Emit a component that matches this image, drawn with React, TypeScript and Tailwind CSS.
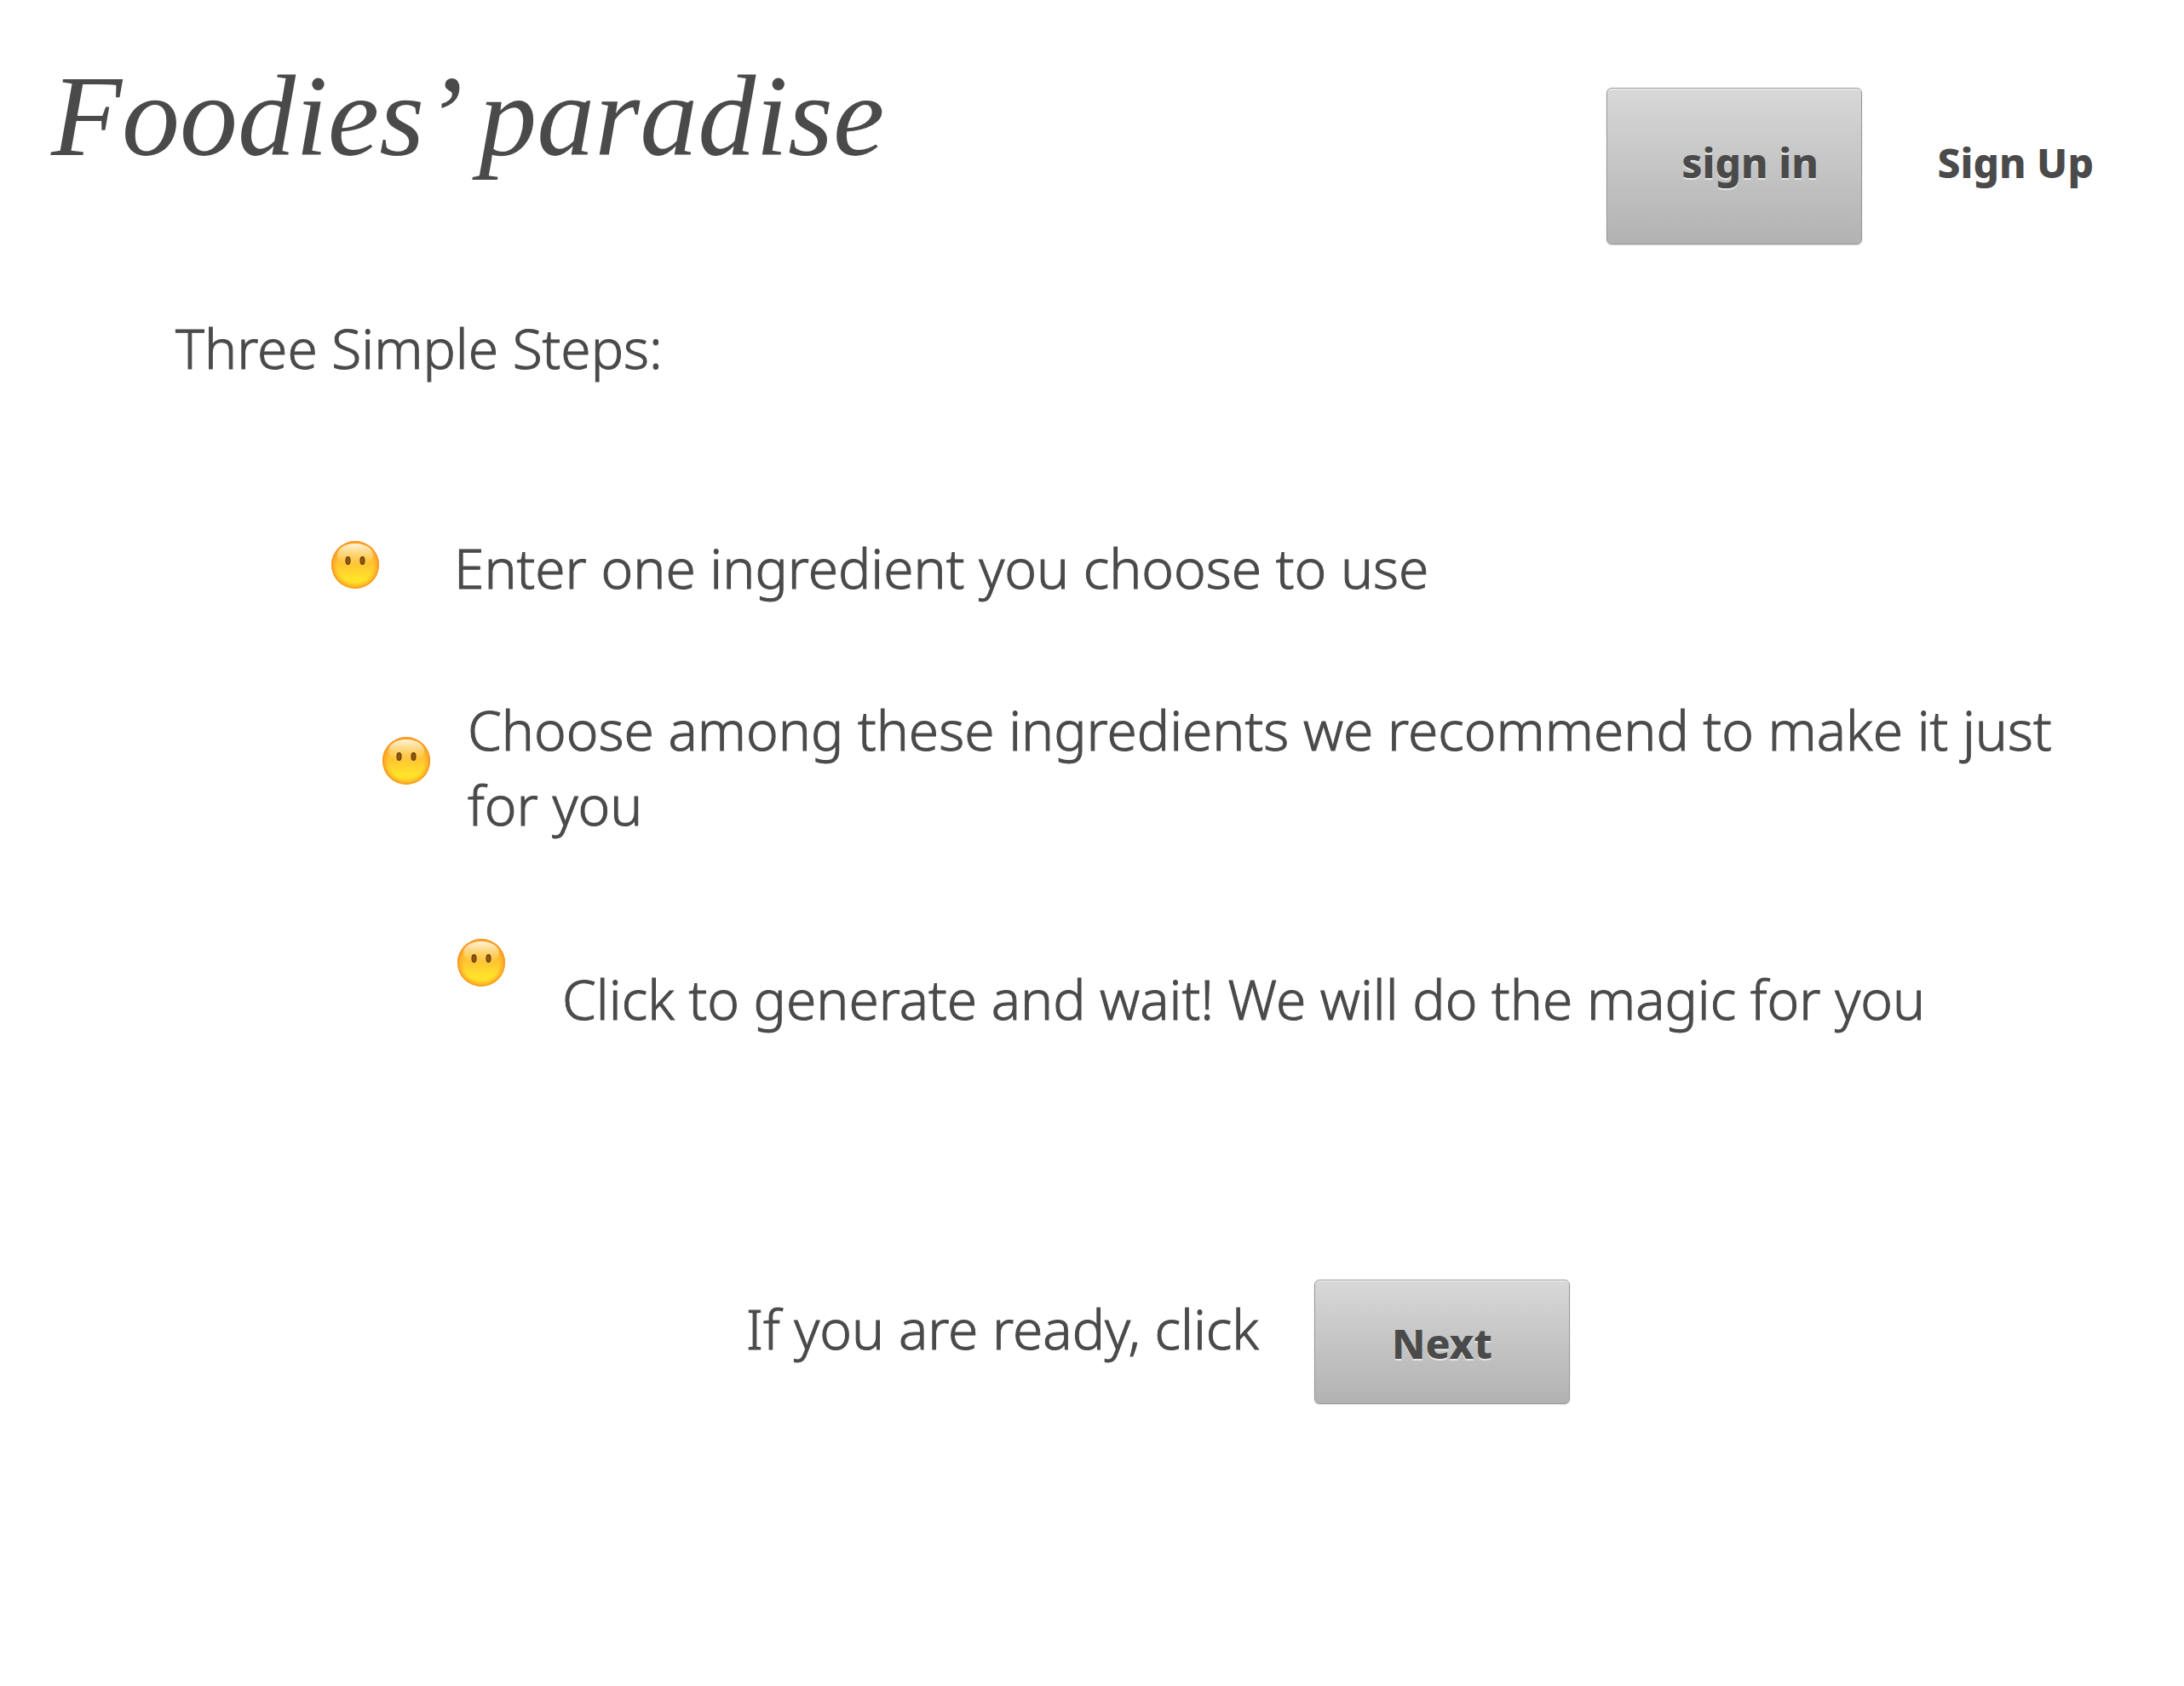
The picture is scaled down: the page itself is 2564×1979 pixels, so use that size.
const body = "text-[64px] leading-[88px] font-light [-webkit-text-stroke:1px_#4a4a4a]";
const button =
  "flex w-[300px] shrink-0 items-center justify-center rounded-md border border-[#979797] bg-linear-to-b from-[#d8d8d8] to-[#b2b2b2] text-5xl leading-[72px] font-extrabold shadow-[inset_0_1px_0_rgba(255,255,255,0.9),0_1px_2px_rgba(0,0,0,0.15)] text-shadow-[0_2px_0_rgba(255,255,255,0.6)]";

function Face({ className }: { className: string }) {
  return (
    <svg viewBox="0 0 56 56" className={`size-14 shrink-0 ${className}`} aria-hidden="true">
      <defs>
        <linearGradient id="skin" x1="0" y1="0" x2="0" y2="1">
          <stop offset="0" stopColor="#fdb92b" />
          <stop offset="0.45" stopColor="#ffc233" />
          <stop offset="0.8" stopColor="#ffe42a" />
          <stop offset="1" stopColor="#ffd824" />
        </linearGradient>
        <radialGradient id="rim">
          <stop offset="0.74" stopColor="#fb9a22" stopOpacity="0" />
          <stop offset="0.9" stopColor="#fb9a22" stopOpacity="0.5" />
          <stop offset="1" stopColor="#f98a1b" />
        </radialGradient>
        <linearGradient id="shine" x1="0" y1="0" x2="0" y2="1">
          <stop offset="0" stopColor="#fff8e8" stopOpacity="0.95" />
          <stop offset="1" stopColor="#ffe08a" stopOpacity="0" />
        </linearGradient>
      </defs>
      <circle cx="28" cy="28" r="28" fill="url(#skin)" />
      <circle cx="28" cy="28" r="28" fill="url(#rim)" />
      <ellipse cx="28" cy="16" rx="21" ry="13" fill="url(#shine)" />
      <g fill="#94550c" stroke="#63400f" strokeWidth="1.2">
        <ellipse cx="19.5" cy="23" rx="2.5" ry="4.4" />
        <ellipse cx="36.5" cy="23" rx="2.5" ry="4.4" />
      </g>
    </svg>
  );
}

export default function App() {
  return (
    <div className="min-h-screen w-full bg-white pt-12 text-[#4a4a4a] [font-family:'Noto_Sans',sans-serif]">
      <header className="flex items-start justify-between pr-[106px] pl-[60px]">
        <h1 className="pt-2 text-[136px] leading-[160px] whitespace-nowrap italic [font-family:'Liberation_Serif',serif]">
          Foodies’ paradise
        </h1>
        <div className="flex gap-[88px] pt-[55px]">
          <button type="button" className={`h-[184px] pb-2 pl-9 ${button}`}>
            sign in
          </button>
          <button type="button" className="pb-2 text-5xl leading-[72px] font-extrabold whitespace-nowrap">
            Sign Up
          </button>
        </div>
      </header>

      <main>
        <h2 className={`mt-[78px] pl-[206px] ${body}`}>Three Simple Steps:</h2>
        <ol className={`mt-[170px] pr-[90px] ${body}`}>
          <li className="flex items-start gap-[88px] pl-[389px]">
            <Face className="mt-[12px]" />
            <p>Enter one ingredient you choose to use</p>
          </li>
          <li className="mt-[102px] flex items-start gap-[44px] pl-[449px]">
            <Face className="mt-[52px]" />
            <p>Choose among these ingredients we recommend to make it just for you</p>
          </li>
          <li className="mt-[113px] flex items-start gap-[67px] pl-[537px]">
            <Face className="mt-0" />
            <p className="pt-[27px]">Click to generate and wait! We will do the magic for you</p>
          </li>
        </ol>
        <div className="mt-[285px] flex items-start gap-[65px] pl-[876px]">
          <p className={`pt-[14px] whitespace-nowrap ${body}`}>If you are ready, click</p>
          <button type="button" className={`h-[146px] pt-1 ${button}`}>
            Next
          </button>
        </div>
      </main>
    </div>
  );
}
